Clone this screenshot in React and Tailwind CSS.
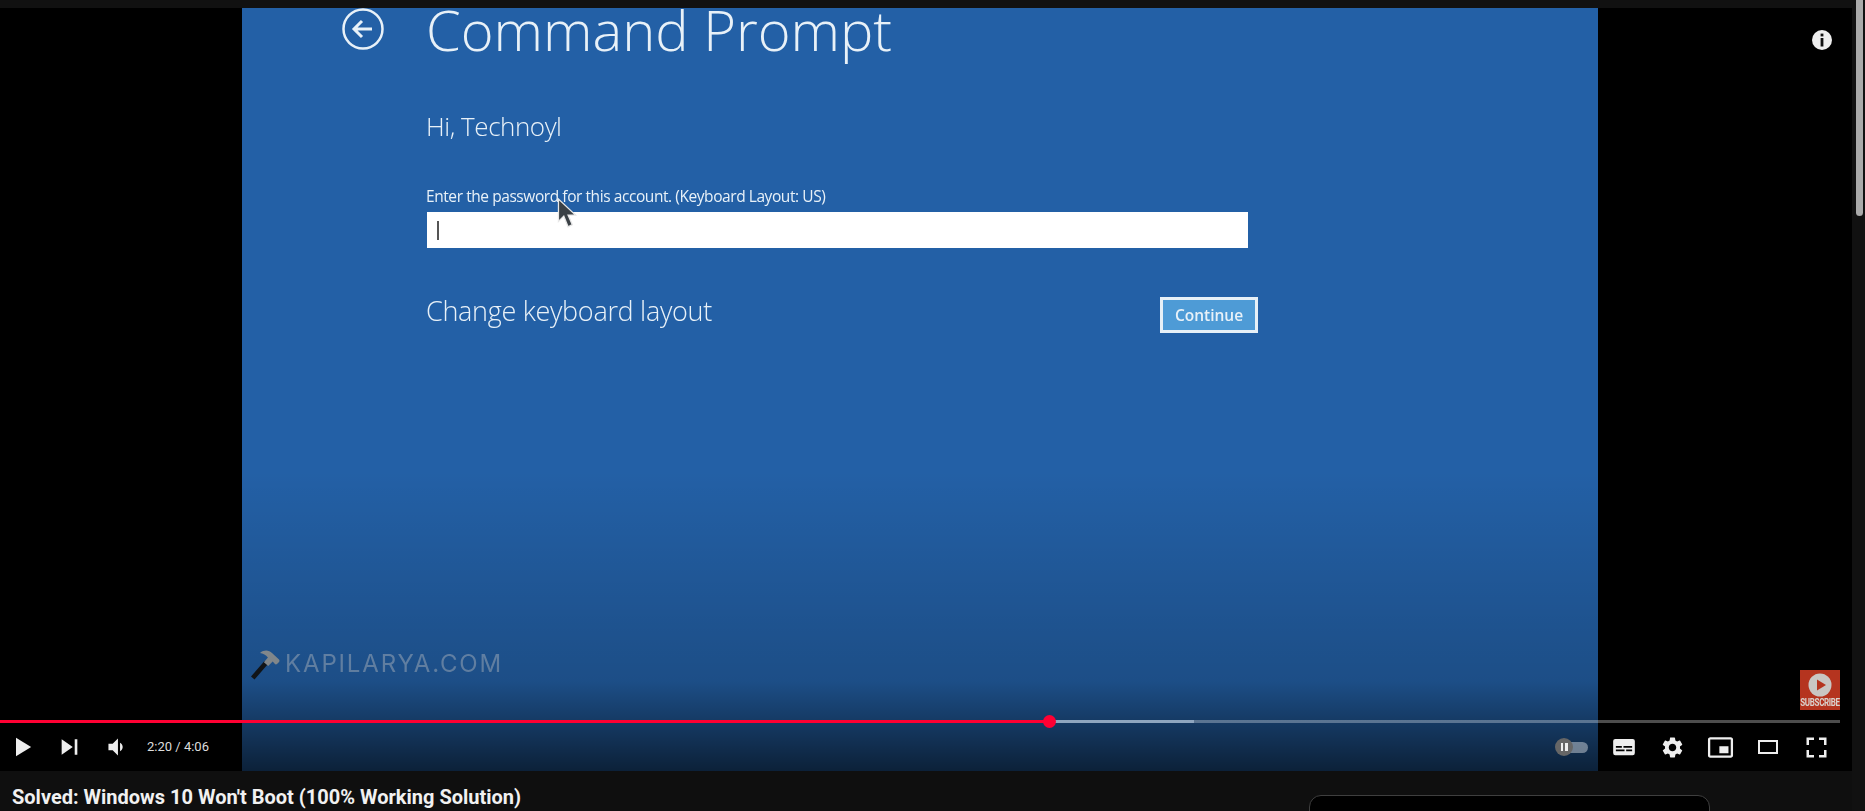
import { MdSettings } from 'react-icons/md';

function PlayerIcon({ d, size = 48 }) {
  return (
    <svg viewBox="0 0 36 36" width={size} height={size} fill="#eeeeee">
      <path d={d} />
    </svg>
  );
}

function ControlButton({ children, className = 'w-12' }) {
  return (
    <button type="button" className={`flex h-12 items-center justify-center ${className}`}>
      {children}
    </button>
  );
}

function SubtitlesIcon() {
  return (
    <svg viewBox="0 0 24 24" width="26" height="26" fill="#eeeeee">
      <path
        fillRule="evenodd"
        d="M4 4.5h16a2 2 0 0 1 2 2v11a2 2 0 0 1-2 2H4a2 2 0 0 1-2-2v-11a2 2 0 0 1 2-2ZM4.5 11v1.6H10V11H4.5Zm7 0v1.6h8V11h-8Zm-7 3.4V16h8v-1.6h-8Zm9.5 0V16h5.5v-1.6H14Z"
      />
    </svg>
  );
}

function Hammer() {
  return (
    <svg viewBox="0 0 32 32" width="32" height="32">
      <path d="M2 28.5 15.5 13l3.5 3L5.5 31.5Z" fill="#15181c" />
      <path d="M11 5c4-3.5 9-3 12 0l7 6.5c.8.9.5 2-.2 2.8l-1.8 1.8c-.9.6-1.8.3-2.3-.3l-2-2.3-4.5 4.5-4.3-3.8 4-4.6C17 7 14 5.5 11 5Z" fill="#9aa1a6" />
    </svg>
  );
}

export default function App() {
  return (
    <div className="flex h-[811px] w-full overflow-hidden bg-[#0f0f0f] font-['Roboto',sans-serif]">
      <div className="flex min-w-0 flex-1 flex-col">
        <div className="h-2 shrink-0 bg-[#111111]" />

        <div className="relative flex h-[763px] shrink-0 justify-center overflow-hidden bg-black">
          <div className="relative ml-[242px] mr-[254px] flex flex-1 flex-col overflow-hidden bg-[#2360a6] pl-[99px] font-['Open_Sans',sans-serif] text-[#e8f1f8]">
            <div className="mt-[-20px] flex h-20 items-center gap-[41px]">
              <svg viewBox="0 0 44 44" width="44" height="44" className="mt-[1px] shrink-0" fill="none" stroke="#e8f1f8" strokeWidth="2.5">
                <circle cx="22" cy="22" r="19.5" />
                <path d="M31 22H13M21 14l-8 8 8 8" strokeWidth="3" />
              </svg>
              <h1 className="mt-[2px] text-[56px] leading-[80px] font-light whitespace-nowrap blur-[0.5px]">Command Prompt</h1>
            </div>

            <div className="ml-[85px] flex flex-col">
              <p className="mt-[40px] text-[26px] leading-9 font-light tracking-[-0.45px] blur-[0.5px]">Hi, Technoyl</p>
              <p className="mt-[42px] text-[15.5px] leading-5 tracking-[-0.43px] blur-[0.5px]">Enter the password for this account. (Keyboard Layout: US)</p>
              <div className="mt-[6px] ml-px flex h-[36px] w-[821px] items-center bg-white pl-[10px]">
                <div className="h-[19px] w-0.5 bg-[#555555]" />
              </div>
              <div className="mt-[49px] flex w-[832px] items-start justify-between">
                <p className="mt-[-4px] text-[27px] leading-[36px] font-light tracking-[-0.3px] blur-[0.5px]">Change keyboard layout</p>
                <button type="button" className="h-[36px] w-[98px] border-[3px] border-[#e6f0f7] bg-[#4e9bd6] pt-[1px] text-[15.5px] font-semibold text-[#e8f1f8] blur-[0.4px]">
                  Continue
                </button>
              </div>
            </div>

            <svg viewBox="0 0 20 30" width="22" height="32" className="absolute top-[190px] left-[314px]">
              <path d="M2 1v21l5-5 4 10 4-2-4-9h7Z" fill="#3a4045" stroke="#e8e8e8" strokeWidth="1.2" />
            </svg>

            <div className="absolute top-[638px] left-[7px] flex items-center gap-[4px]">
              <Hammer />
              <span className="font-['Inter',sans-serif] text-[24px] font-normal tracking-[1.85px] text-[#7498c2] blur-[0.5px]">KAPILARYA.COM</span>
            </div>
          </div>

          {/* blue fades out under the controls */}
          <div className="pointer-events-none absolute inset-x-0 bottom-0 h-[300px] bg-gradient-to-b from-transparent via-[#00000030] via-70% to-[#000000a8]" />

          <div className="absolute top-[22px] right-[20px]">
            <svg viewBox="0 0 20 20" width="20" height="20">
              <circle cx="10" cy="10" r="10" fill="#eeeeee" />
              <rect x="8.6" y="8" width="2.8" height="8.5" fill="#111111" />
              <rect x="8.6" y="3.6" width="2.8" height="2.8" fill="#111111" />
            </svg>
          </div>

          <div className="absolute top-[662px] right-[12px] flex h-10 w-10 flex-col items-center overflow-hidden bg-[#b5341f] pt-[3px]">
            <svg viewBox="0 0 24 24" width="24" height="24" className="shrink-0">
              <circle cx="12" cy="12" r="11.5" fill="#c9c6c3" />
              <path d="M9 6.5v11l9-5.5Z" fill="#b5341f" />
            </svg>
            <span className="mt-[1px] scale-y-125 text-[8px] leading-[10px] font-bold tracking-[-0.35px] whitespace-nowrap text-[#d9d2cd]">SUBSCRIBE</span>
          </div>

          {/* progress and controls */}
          <div className="absolute inset-x-0 bottom-0">
            <div className="relative mr-3 flex h-[3px]">
              <div className="w-[1049px] bg-[#ff0033]" />
              <div className="w-[145px] bg-[#8fa6bf]" />
              <div className="flex-1 bg-[#ffffff4d]" />
              <div className="absolute top-[-5px] left-[1043px] h-[13px] w-[13px] rounded-full bg-[#ff0033]" />
            </div>
            <div className="flex h-12 items-center pr-3">
              <ControlButton className="w-[46px]">
                <PlayerIcon size={42} d="M12 26 25 18 12 10Z" />
              </ControlButton>
              <ControlButton className="w-[47px]">
                <PlayerIcon d="M12 24 20.5 18 12 12V24ZM22 12v12h2V12h-2Z" />
              </ControlButton>
              <ControlButton className="w-[52px]">
                <PlayerIcon size={38} d="M8 21h4l5 5V10l-5 5H8v6ZM19 14v8c1.48-.68 2.5-2.23 2.5-4 0-1.74-1.02-3.26-2.5-4Z" />
              </ControlButton>
              <span className="ml-[2px] text-[13px] text-[#dddddd]">2:20 / 4:06</span>

              <div className="relative mr-[12px] ml-auto flex h-[18px] w-[33px] items-center">
                <div className="ml-[8px] h-[11px] flex-1 rounded-full bg-[#ffffff66]" />
                <div className="absolute top-0 left-0 flex h-[18px] w-[18px] items-center justify-center gap-[2px] rounded-full bg-[#666666]">
                  <div className="h-2 w-[2.5px] bg-[#eeeeee]" />
                  <div className="h-2 w-[2.5px] bg-[#eeeeee]" />
                </div>
              </div>

              <ControlButton>
                <SubtitlesIcon />
              </ControlButton>
              <ControlButton>
                <MdSettings size={25} color="#eeeeee" />
              </ControlButton>
              <ControlButton>
                <PlayerIcon size={41} d="M25 17h-8v6h8v-6ZM29 25V10.98C29 9.88 28.1 9 27 9H9c-1.1 0-2 .88-2 1.98V25c0 1.1.9 2 2 2h18c1.1 0 2-.9 2-2Zm-2 .02H9V10.97h18v14.05Z" />
              </ControlButton>
              <ControlButton>
                <PlayerIcon size={36} d="M28 11v14H8V11ZM10 13v10h16V13Z" />
              </ControlButton>
              <ControlButton>
                <PlayerIcon size={45} d="M10 16h2v-4h4v-2h-6v6ZM20 10v2h4v4h2v-6h-6ZM24 24h-4v2h6v-6h-2v4ZM12 20h-2v6h6v-2h-4v-4Z" />
              </ControlButton>
            </div>
          </div>
        </div>

        <div className="flex flex-1 items-start overflow-hidden">
          <h2 className="ml-3 pt-[14px] text-[20px] leading-6 font-bold whitespace-nowrap text-[#f1f1f1]">
            Solved: Windows 10 Won&apos;t Boot (100% Working Solution)
          </h2>
          <div className="mt-6 ml-auto mr-[142px] h-10 w-[401px] rounded-xl border border-[#3f3f3f] bg-black" />
        </div>
      </div>

      <div className="w-[13px] shrink-0 bg-[#111111] pl-1">
        <div className="h-[216px] w-[7px] rounded-b-[4px] bg-[#aaaaaa]" />
      </div>
    </div>
  );
}
